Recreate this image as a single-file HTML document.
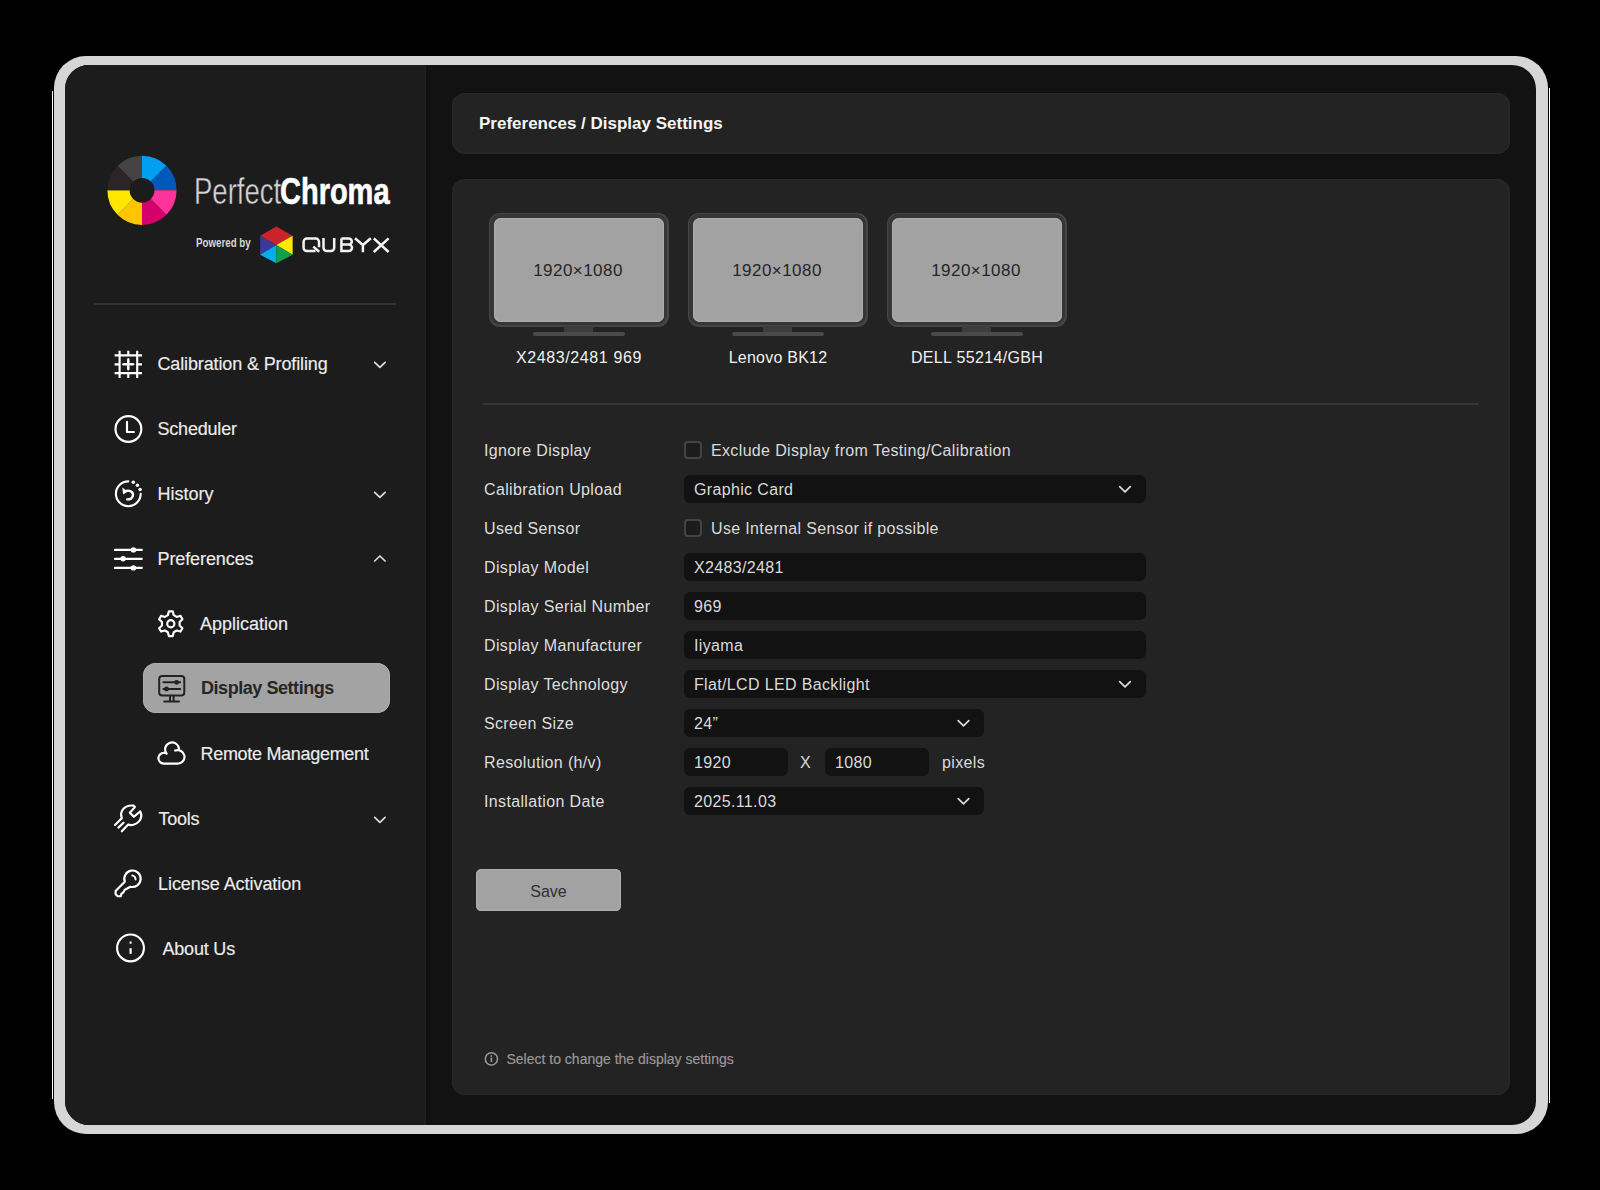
<!DOCTYPE html>
<html><head><meta charset="utf-8">
<style>
html,body{margin:0;padding:0;}
body{width:1600px;height:1190px;background:#000;position:relative;overflow:hidden;font-family:"Liberation Sans",sans-serif;}
.a{position:absolute;}
.t{position:absolute;white-space:nowrap;line-height:1;}
#frame{left:54px;top:56px;width:1494px;height:1078px;border-radius:32px;background:#d6d6d6;}
#inner{left:65px;top:65px;width:1471px;height:1060px;border-radius:24px;background:#121212;overflow:hidden;}
#side{left:0;top:0;width:361px;height:1060px;background:#1c1c1c;box-shadow:inset -2px 0 0 #1f1f1f, 2px 0 0 #101010;}
.card{background:#232323;border-radius:13px;box-shadow:inset 0 0 0 1.5px #272727;}
.mi{font-size:18px;color:#ececec;-webkit-text-stroke:0.15px #ececec;}
.lb{font-size:16px;color:#dedede;letter-spacing:0.35px;}
.inp{position:absolute;left:684px;width:462px;height:28px;background:#121212;border-radius:6px;}
.it{font-size:16px;color:#dadada;letter-spacing:0.35px;}
.cb{position:absolute;left:684px;width:14px;height:14px;border:2px solid #444;border-radius:4px;background:#1c1c1c;}
.mon{position:absolute;top:212.5px;width:180px;height:114px;border-radius:11px;background:#464646;}
.mon i{position:absolute;left:1.5px;top:1.5px;right:1.5px;bottom:1.5px;border-radius:10px;background:#363636;}
.mon b{position:absolute;left:5.3px;top:5.3px;right:4.2px;bottom:4.6px;border-radius:7px;background:#a2a2a2;box-shadow:inset 0 0 0 1.2px #acacac;}
.neck{position:absolute;top:326px;width:29px;height:6px;background:#3d3d3d;}
.base{position:absolute;top:331.8px;width:92px;height:4.4px;border-radius:2.2px;background:#4a4a4a;}
.mt{font-size:17px;color:#262626;letter-spacing:0.45px;}
.ml{font-size:16px;color:#f0f0f0;letter-spacing:0.6px;}
.logo{position:absolute;white-space:nowrap;line-height:1;transform-origin:0 0;}
</style></head>
<body>
<div class="a" style="left:52px;top:91px;width:1px;height:1008px;background:#fff;"></div>
<div class="a" style="left:1549px;top:88px;width:1px;height:1015px;background:#fff;"></div>
<div id="frame" class="a"></div>
<div id="inner" class="a"><div id="side" class="a"></div></div>

<!-- logo text -->
<div class="logo" style="left:193.6px;top:174px;font-size:36.7px;color:#d4d4d4;transform:scaleX(0.75);-webkit-text-stroke:0.45px #1c1c1c;">Perfect</div>
<div class="logo" style="left:280.2px;top:174px;font-size:36.7px;font-weight:bold;color:#fff;transform:scaleX(0.79);-webkit-text-stroke:0.6px #fff;">Chroma</div>
<div class="logo" style="left:196.3px;top:236.2px;font-size:13.1px;font-weight:bold;color:#d6d6d6;transform:scaleX(0.745);">Powered by</div>

<!-- sidebar divider -->
<div class="a" style="left:94px;top:303px;width:302px;height:2px;background:#333;"></div>

<!-- active item -->
<div class="a" style="left:143px;top:663.3px;width:247px;height:50.2px;border-radius:13px;background:#a3a3a3;box-shadow:inset 0 0 0 1px #adadad;"></div>

<!-- sidebar text -->
<div class="t mi" style="left:157.5px;top:355px;letter-spacing:-0.13px;">Calibration &amp; Profiling</div>
<div class="t mi" style="left:157.5px;top:420px;letter-spacing:-0.2px;">Scheduler</div>
<div class="t mi" style="left:157.5px;top:485px;">History</div>
<div class="t mi" style="left:157.5px;top:550px;letter-spacing:-0.1px;">Preferences</div>
<div class="t mi" style="left:200px;top:615px;">Application</div>
<div class="t mi" style="left:201px;top:679px;color:#262626;font-weight:bold;letter-spacing:-0.45px;-webkit-text-stroke:0;">Display Settings</div>
<div class="t mi" style="left:200.5px;top:745px;letter-spacing:-0.3px;">Remote Management</div>
<div class="t mi" style="left:158.5px;top:810px;letter-spacing:-0.25px;">Tools</div>
<div class="t mi" style="left:158px;top:875px;letter-spacing:-0.05px;">License Activation</div>
<div class="t mi" style="left:162.5px;top:940px;letter-spacing:-0.2px;">About Us</div>

<!-- header card -->
<div class="a card" style="left:452px;top:92.5px;width:1058px;height:61.5px;"></div>
<div class="t" style="left:479px;top:114.8px;font-size:17px;font-weight:bold;color:#f5f5f5;">Preferences / Display Settings</div>

<!-- main card -->
<div class="a card" style="left:452px;top:179px;width:1058px;height:916px;"></div>

<!-- monitors -->
<div class="mon" style="left:488.5px;"><i></i><b></b></div>
<div class="mon" style="left:687.5px;"><i></i><b></b></div>
<div class="mon" style="left:886.5px;"><i></i><b></b></div>
<div class="neck" style="left:564.3px;"></div><div class="base" style="left:532.8px;"></div>
<div class="neck" style="left:763.3px;"></div><div class="base" style="left:731.8px;"></div>
<div class="neck" style="left:962.3px;"></div><div class="base" style="left:930.8px;"></div>
<div class="t mt" style="left:488px;width:180px;text-align:center;top:261.5px;">1920×1080</div>
<div class="t mt" style="left:687px;width:180px;text-align:center;top:261.5px;">1920×1080</div>
<div class="t mt" style="left:886px;width:180px;text-align:center;top:261.5px;">1920×1080</div>
<div class="t ml" style="left:478.5px;width:201px;text-align:center;top:350px;">X2483/2481 969</div>
<div class="t ml" style="left:677.5px;width:201px;text-align:center;top:350px;letter-spacing:0.23px;">Lenovo BK12</div>
<div class="t ml" style="left:876.5px;width:201px;text-align:center;top:350px;letter-spacing:0.34px;">DELL 55214/GBH</div>

<!-- separator -->
<div class="a" style="left:483px;top:403px;width:995px;height:2px;background:#363636;"></div>

<!-- form labels -->
<div class="t lb" style="left:484px;top:443px;">Ignore Display</div>
<div class="t lb" style="left:484px;top:482px;">Calibration Upload</div>
<div class="t lb" style="left:484px;top:521px;">Used Sensor</div>
<div class="t lb" style="left:484px;top:560px;">Display Model</div>
<div class="t lb" style="left:484px;top:599px;">Display Serial Number</div>
<div class="t lb" style="left:484px;top:638px;">Display Manufacturer</div>
<div class="t lb" style="left:484px;top:677px;">Display Technology</div>
<div class="t lb" style="left:484px;top:716px;">Screen Size</div>
<div class="t lb" style="left:484px;top:755px;">Resolution (h/v)</div>
<div class="t lb" style="left:484px;top:794px;">Installation Date</div>

<!-- form controls -->
<div class="cb" style="top:441px;"></div>
<div class="t it" style="left:711px;top:443px;">Exclude Display from Testing/Calibration</div>
<div class="inp" style="top:475px;"></div>
<div class="t it" style="left:694px;top:482px;">Graphic Card</div>
<div class="cb" style="top:519px;"></div>
<div class="t it" style="left:711px;top:521px;">Use Internal Sensor if possible</div>
<div class="inp" style="top:553px;"></div>
<div class="t it" style="left:694px;top:560px;">X2483/2481</div>
<div class="inp" style="top:592px;"></div>
<div class="t it" style="left:694px;top:599px;">969</div>
<div class="inp" style="top:631px;"></div>
<div class="t it" style="left:694px;top:638px;">Iiyama</div>
<div class="inp" style="top:670px;"></div>
<div class="t it" style="left:694px;top:677px;">Flat/LCD LED Backlight</div>
<div class="inp" style="top:709px;width:300px;"></div>
<div class="t it" style="left:694px;top:716px;">24”</div>
<div class="inp" style="top:748px;width:104px;"></div>
<div class="t it" style="left:694px;top:755px;">1920</div>
<div class="t it" style="left:800px;top:755px;">X</div>
<div class="inp" style="top:748px;left:825px;width:104px;"></div>
<div class="t it" style="left:835px;top:755px;">1080</div>
<div class="t it" style="left:942px;top:755px;">pixels</div>
<div class="inp" style="top:787px;width:300px;"></div>
<div class="t it" style="left:694px;top:794px;">2025.11.03</div>

<!-- save -->
<div class="a" style="left:476.3px;top:869.3px;width:144.3px;height:42px;border-radius:5.5px;background:#a2a2a2;box-shadow:inset 0 0 0 1.2px #adadad;"></div>
<div class="t" style="left:476.5px;width:144px;text-align:center;top:884px;font-size:16px;color:#303030;">Save</div>

<!-- footer -->
<div class="t" style="left:506.5px;top:1051.7px;font-size:14px;color:#989898;-webkit-text-stroke:0.2px #989898;">Select to change the display settings</div>

<svg class="a" style="left:0;top:0;" width="1600" height="1190" viewBox="0 0 1600 1190">
<!-- logo wheel -->
<path fill="#009ff0" d="M142.00 155.70A34.6 34.6 0 0 1 166.47 165.83L150.77 181.53A12.4 12.4 0 0 0 142.00 177.90Z"/>
<path fill="#0059b8" d="M166.47 165.83A34.6 34.6 0 0 1 176.60 190.30L154.40 190.30A12.4 12.4 0 0 0 150.77 181.53Z"/>
<path fill="#ff3399" d="M176.60 190.30A34.6 34.6 0 0 1 166.47 214.77L150.77 199.07A12.4 12.4 0 0 0 154.40 190.30Z"/>
<path fill="#d6006a" d="M166.47 214.77A34.6 34.6 0 0 1 142.00 224.90L142.00 202.70A12.4 12.4 0 0 0 150.77 199.07Z"/>
<path fill="#ffc600" d="M142.00 224.90A34.6 34.6 0 0 1 117.53 214.77L133.23 199.07A12.4 12.4 0 0 0 142.00 202.70Z"/>
<path fill="#ffe800" d="M117.53 214.77A34.6 34.6 0 0 1 107.40 190.30L129.60 190.30A12.4 12.4 0 0 0 133.23 199.07Z"/>
<path fill="#2b2525" d="M107.40 190.30A34.6 34.6 0 0 1 117.53 165.83L133.23 181.53A12.4 12.4 0 0 0 129.60 190.30Z"/>
<path fill="#444444" d="M117.53 165.83A34.6 34.6 0 0 1 142.00 155.70L142.00 177.90A12.4 12.4 0 0 0 133.23 181.53Z"/>
<!-- qubyx hexagon -->
<path fill="#cc2229" d="M260.2 235.8L276.4 226.6L292.6 235.8L276.4 245Z"/>
<path fill="#3b3a9c" d="M260.2 235.8L276.4 245L260.2 254.8Z"/>
<path fill="#ffea00" d="M292.6 235.8L276.4 245L292.6 254.8Z"/>
<path fill="#00aeef" d="M260.2 254.8L276.4 245L276.4 263.3Z"/>
<path fill="#0da14b" d="M276.4 245L292.6 254.8L276.4 263.3Z"/>
<!-- QUBYX letters -->
<g fill="none" stroke="#f4f4f4" stroke-width="2.5">
<path d="M319 247.2V241.8A3.2 3.2 0 0 0 315.8 238.6H306.8A3.2 3.2 0 0 0 303.6 241.8V247.8A3.2 3.2 0 0 0 306.8 251H315.5"/>
<path d="M313.3 246.6L319.2 251.8"/>
<path d="M323.5 238V247.8A3.2 3.2 0 0 0 326.7 251H331A3.2 3.2 0 0 0 334.2 247.8V238"/>
<path d="M341.4 238.6H348.8A3 3 0 0 1 348.8 244.6H341.4M341.4 244.6H348.8A3.2 3.2 0 0 1 348.8 251H341.4V238.6"/>
<path d="M355 238.3L362.9 245L370.8 238.3M362.9 245V252.2"/>
<path d="M373.8 238.3L388.6 252M388.6 238.3L373.8 252"/>
</g>
<!-- sidebar icons -->
<g fill="none" stroke="#ffffff" stroke-width="2.15">
<path d="M119.6 350.7V378M137.2 350.7V378M114.6 355.4H142M114.6 373.1H142M128.3 350.7V355.4M128.3 373.1V378M114.6 364.3H119.6M137.2 364.3H142"/>
<circle cx="128.4" cy="429" r="12.9"/>
<path d="M127 421.8V432H133.9" stroke-linecap="round" stroke-linejoin="round"/>
<path d="M128.3 481.4A12.4 12.4 0 1 0 140.7 493.8" stroke-linecap="round"/>
<path d="M125 491.3C128.5 489.8 133 491 133 494.8C133 498.2 130 499.6 127.2 499.4" stroke-linecap="round" stroke-width="2.4"/>
<path d="M114.9 549.9H141.8M114.9 558.8H141.8M114.9 567.9H141.8" stroke-linecap="round"/>
<path d="M167.87 615.19 L168.84 611.35 L172.76 611.35 L173.73 615.19 L176.70 616.91 L180.51 615.83 L182.47 619.22 L179.63 621.98 L179.63 625.42 L182.47 628.18 L180.51 631.57 L176.70 630.49 L173.73 632.21 L172.76 636.05 L168.84 636.05 L167.87 632.21 L164.90 630.49 L161.09 631.57 L159.13 628.18 L161.97 625.42 L161.97 621.98 L159.13 619.22 L161.09 615.83 L164.90 616.91Z" stroke-linejoin="round"/>
<circle cx="170.8" cy="623.7" r="3.6"/>
<path d="M178.9 748.6A6.9 6.9 0 1 0 166.6 753.6A5.4 5.4 0 1 0 164.3 763.6H177.5A6.75 6.75 0 1 0 175.2 750.6" stroke-linejoin="round" stroke-linecap="round"/>

<path d="M121.8 818.2L115 824.9M123.5 822.7L118.4 827.6M128.2 824.6L121.8 831.3" stroke-linecap="round"/>
<path d="M121.8 818.2C120.8 815.5 121 811.5 123.5 808.8C126 806 130 805.2 133.5 805.6L134.9 807.1L129.8 812.8L133.9 816.8L140.3 811.4C141.8 814.5 141.5 818.5 138.8 821.6C135.8 825 131 825.6 128.2 824.6" stroke-linejoin="round"/>
<path d="M124.8 881.7A8.2 8.2 0 1 1 130.4 886.7L127.2 888.5L124.6 889.9L123.5 892.2L121.4 893.9L120.8 896.1L117.7 896.3L115.6 894.3L115.6 890.9Z" stroke-linejoin="round"/>
<path d="M132.2 875.4A4.3 4.3 0 0 1 135.6 879.5" stroke-linecap="round" stroke-width="1.8"/>
<circle cx="130.5" cy="947.9" r="13.4"/>
<path d="M130.6 948.2V953.9"/>
</g>
<g fill="#ffffff">
<ellipse cx="125.2" cy="364.3" rx="3.2" ry="1.3"/><ellipse cx="131.4" cy="364.3" rx="3.2" ry="1.3"/>
<ellipse cx="128.3" cy="361.2" rx="1.3" ry="3.2"/><ellipse cx="128.3" cy="367.4" rx="1.3" ry="3.2"/>
<circle cx="133.3" cy="482.3" r="1.75"/><circle cx="137.4" cy="485.2" r="1.75"/><circle cx="140.1" cy="489.4" r="1.75"/>
<path d="M122.3 487.6L123.1 494.4L127.9 491.6Z"/>
<circle cx="133.4" cy="549.9" r="2.7"/><circle cx="123.1" cy="558.8" r="2.7"/><circle cx="133.4" cy="567.9" r="2.7"/>
<rect x="129.6" y="941.5" width="2" height="2.2"/>
</g>
<!-- display settings icon (dark) -->
<g fill="none" stroke="#222" stroke-width="2">
<rect x="159.2" y="676" width="25.1" height="19.6" rx="3"/>
<path d="M163.4 682.3H180.2M163.4 689H180.2M170 696V701M173.6 696V701M164.2 701.4H179" stroke-linecap="round"/>
</g>
<g fill="#222"><circle cx="176.6" cy="682.3" r="2.4"/><circle cx="166.5" cy="689" r="2.4"/></g>
<!-- chevrons -->
<g fill="none" stroke="#dddddd" stroke-width="1.7" stroke-linecap="round" stroke-linejoin="round">
<path d="M374.7 362.4L379.9 367.4L385.1 362.4"/>
<path d="M374.7 492.4L379.9 497.4L385.1 492.4"/>
<path d="M374.7 561L379.9 556L385.1 561"/>
<path d="M374.7 817.4L379.9 822.4L385.1 817.4"/>
<path d="M1119.7 486.7L1125 491.8L1130.3 486.7"/>
<path d="M1119.7 681.7L1125 686.8L1130.3 681.7"/>
<path d="M958.2 720.7L963.5 725.8L968.8 720.7"/>
<path d="M958.2 798.7L963.5 803.8L968.8 798.7"/>
</g>
<!-- footer info icon -->
<circle cx="491.4" cy="1058.9" r="6.1" fill="none" stroke="#9a9a9a" stroke-width="1.5"/>
<g fill="#9a9a9a"><rect x="490.6" y="1055.2" width="1.6" height="1.6"/><rect x="490.6" y="1057.6" width="1.6" height="4.4"/></g>
</svg></body></html>
